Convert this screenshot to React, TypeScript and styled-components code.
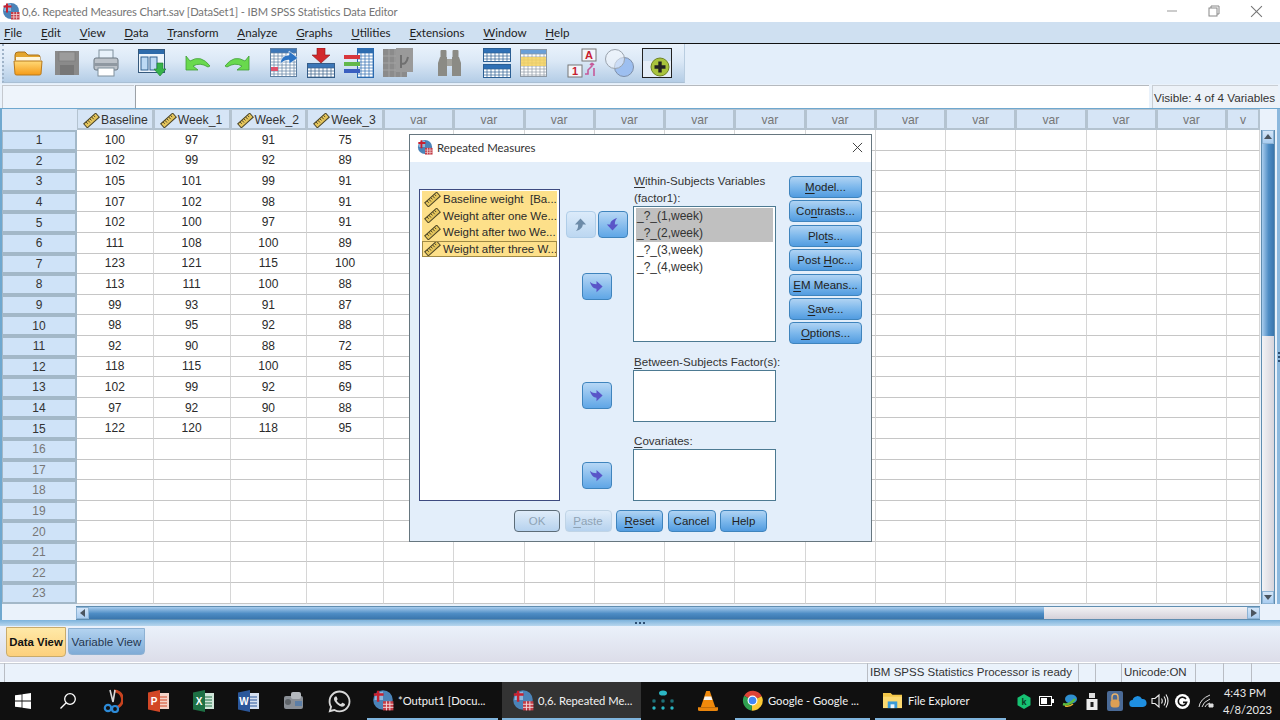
import React from 'react';
import styled, {createGlobalStyle} from 'styled-components';
import {FaWhatsapp} from 'react-icons/fa';

const GlobalStyle = createGlobalStyle`
    html, body {
        margin: 0;
        padding: 0;
        background: #eaf2fb;
        overflow: hidden;
    }
    * {
        box-sizing: border-box;
    }
`;

const UI_FONT = '"Liberation Sans", Arial, sans-serif';
const WIN_FONT = 'Lato, "Open Sans", sans-serif';

const Page = styled.div`
    position: relative;
    width: 1280px;
    height: 720px;
    display: flex;
    flex-direction: column;
    overflow: hidden;
    font-family: ${UI_FONT};
    font-size: 12px;
    color: #222;
`;

/* window chrome */

const TitleBar = styled.div`
    height: 22px;
    background: #fff;
    display: flex;
    align-items: center;
    padding-left: 2px;
    gap: 2px;
    font-family: ${WIN_FONT};
    font-size: 11.2px;
    letter-spacing: -0.13px;
    color: #757575;
`;

const WindowControls = styled.div`
    margin-left: auto;
    display: flex;
    align-items: center;
    padding-right: 17px;
    gap: 30px;
`;

const MenuBar = styled.div`
    height: 22px;
    background: #cfe0f1;
    border-bottom: 1px solid #111;
    display: flex;
    align-items: center;
    padding-left: 4px;
    gap: 18.8px;
    font-family: ${WIN_FONT};
    font-size: 11.6px;
    color: #222;
`;

const U = styled.span`
    text-decoration: underline;
    text-underline-offset: 2px;
`;

const ToolRow = styled.div`
    height: 40px;
    background: #e3eefa;
    display: flex;
`;

const Toolbar = styled.div`
    width: 683px;
    height: 39px;
    margin-left: 2px;
    display: flex;
    align-items: center;
    padding-left: 9px;
    background: linear-gradient(#eaf3fc, #dbe8f6 45%, #b4cde6);
    border-left: 2px dotted #9fb3c8;
    border-bottom: 1px solid #a9bfd4;
    border-right: 1px solid #b9cde0;
`;

const Tool = styled.div<{$ml: number; $w: number}>`
    margin-left: ${({$ml}) => $ml}px;
    width: ${({$w}) => $w}px;
    height: 32px;
    display: flex;
    align-items: center;
    justify-content: center;
    flex: none;
`;

const EditRow = styled.div`
    height: 24px;
    display: flex;
    background: #eaf2fb;
    padding: 1px 2px 0;
    gap: 1px;
`;

const NameBox = styled.div`
    width: 132px;
    border-top: 1px solid #c5c9cf;
    border-left: 1px solid #c5c9cf;
    background: #eef4fb;
`;

const ValueBox = styled.div`
    width: 1015px;
    background: #fff;
    border-top: 1px solid #b5b9be;
    border-left: 1px solid #9da1a6;
`;

const VisibleBox = styled.div`
    width: 126px;
    margin-left: 2px;
    background: #edf2f8;
    border-top: 1px solid #c9ced4;
    border-left: 1px solid #c9ced4;
    display: flex;
    align-items: center;
    padding-left: 1px;
    font-size: 11.7px;
    color: #333;
    white-space: nowrap;
`;

/* data sheet */

const Sheet = styled.div`
    height: 512px;
    background: #eaf2fb;
    border-top: 1px solid #6fa8cf;
    border-left: 2px solid #6fa8cf;
    display: flex;
    flex-direction: column;
`;

const SheetMain = styled.div`
    display: flex;
    height: 495px;
`;

const Grid = styled.div`
    width: 1258px;
    display: grid;
    grid-template-columns: 75px repeat(4, 76.75px) repeat(12, 70.25px) 33px;
    grid-template-rows: 21px repeat(23, 20.6px);
    background: #fff;
    overflow: hidden;
`;

const Corner = styled.div`
    background: #dbe8f7;
`;

const ColHead = styled.div<{$empty?: boolean}>`
    background: #d6e5f6;
    border: 1px solid #b4c3d0;
    border-right-width: 2px;
    border-bottom-width: 2px;
    display: flex;
    align-items: center;
    justify-content: ${({$empty}) => ($empty ? 'center' : 'flex-start')};
    padding: 2px 0 0 ${({$empty}) => ($empty ? 0 : 5)}px;
    gap: 1px;
    font-size: 12.2px;
    color: ${({$empty}) => ($empty ? '#777' : '#333')};
    white-space: nowrap;
    overflow: hidden;
`;

const RowHead = styled.div<{$muted: boolean}>`
    background: #cfe3f8;
    border: 2px solid #a3b8c8;
    border-left-width: 1px;
    margin-bottom: 0;
    display: flex;
    align-items: center;
    justify-content: center;
    color: ${({$muted}) => ($muted ? '#777' : '#333')};
`;

const Cell = styled.div`
    border-right: 1px solid #d6d6d6;
    border-bottom: 1px solid #c6c6c6;
    display: flex;
    align-items: center;
    justify-content: center;
    color: #2a2a2a;
`;

const VScroll = styled.div`
    width: 14px;
    margin-left: 1px;
    margin-top: 21px;
    height: 474px;
    display: flex;
    flex-direction: column;
    border-left: 1px solid #5f8db0;
    border-right: 1px solid #5f8db0;
`;

const ScrollButton = styled.div<{$w?: number; $h?: number}>`
    flex: none;
    width: ${({$w}) => ($w ? `${$w}px` : 'auto')};
    height: ${({$h}) => ($h ? `${$h}px` : 'auto')};
    background: linear-gradient(#d5e6f8, #a9cdf0);
    border: 1px solid #8db3d4;
    display: flex;
    align-items: center;
    justify-content: center;
`;

const VThumb = styled.div`
    height: 192px;
    background: linear-gradient(90deg, #a9cdee, #4d8cc4 55%, #3a76ad);
`;

const VTrack = styled.div`
    flex: 1;
    background: linear-gradient(90deg, #f2f2f5, #d8d5dc);
`;

const RightEdge = styled.div`
    width: 3px;
    margin-left: 2px;
    background: #8cb8dd;
    display: flex;
    flex-direction: column;
    align-items: center;
    justify-content: center;
    gap: 2px;
`;

const HScrollRow = styled.div`
    height: 15px;
    margin-top: 2px;
    padding-left: 74px;
    display: flex;
    border-bottom: 1px solid #fff;
`;

const HBar = styled.div`
    width: 1184px;
    display: flex;
    border-top: 1px solid #5f8db0;
    border-bottom: 1px solid #5f8db0;
`;

const HThumb = styled.div`
    width: 955px;
    background: linear-gradient(#a9cdee, #4d8cc4 55%, #3a76ad);
`;

const HTrack = styled.div`
    flex: 1;
    background: linear-gradient(#f2f2f5, #d4d1d9);
`;

const Splitter = styled.div`
    height: 6px;
    background: linear-gradient(#7db3dc, #b7d6ee);
    display: flex;
    align-items: center;
    justify-content: center;
    gap: 2px;
`;

const Dot = styled.span`
    width: 2px;
    height: 2px;
    background: #2d4f74;
`;

const TabsBar = styled.div`
    height: 36px;
    background: linear-gradient(#eaf1fb, #dcdde9);
    display: flex;
    align-items: flex-start;
    padding-left: 6px;
    gap: 2px;
`;

const ViewTab = styled.div<{$active?: boolean}>`
    width: ${({$active}) => ($active ? 60 : 77)}px;
    height: ${({$active}) => ($active ? 30 : 27)}px;
    margin-top: ${({$active}) => ($active ? 1 : 2)}px;
    border-radius: 0 0 4px 4px;
    display: flex;
    align-items: center;
    justify-content: center;
    white-space: nowrap;
    font-size: ${({$active}) => ($active ? 11.4 : 11.6)}px;
    background: ${({$active}) =>
        $active ? 'linear-gradient(#ffe9a8, #fdd07c)' : 'linear-gradient(#b3d3f0, #7fabd6)'};
    border: 1px solid ${({$active}) => ($active ? '#c9ab6c' : '#8db1d3')};
    color: ${({$active}) => ($active ? '#111' : '#24364f')};
    font-weight: ${({$active}) => ($active ? 600 : 400)};
`;

const StatusBar = styled.div`
    height: 20px;
    background: #eaf2fb;
    border-top: 1px solid #fff;
    box-shadow: inset 0 1px 0 #c8cdd4;
    display: flex;
    padding-left: 4px;
    font-size: 11.5px;
`;

const StatusCell = styled.div<{$w: number}>`
    width: ${({$w}) => $w}px;
    border-left: 1px solid #b9bdc4;
    padding-left: 2px;
    color: #333;
    line-height: 19px;
    white-space: nowrap;
`;

/* taskbar */

const Taskbar = styled.div`
    height: 38px;
    background: #101010;
    display: flex;
    align-items: stretch;
    font-family: ${WIN_FONT};
    font-size: 11.2px;
    color: #f2f2f2;
`;

const TaskSlot = styled.div<{$w?: number}>`
    width: ${({$w}) => $w || 45.3}px;
    flex: none;
    display: flex;
    align-items: center;
    justify-content: center;
`;

const AppButton = styled.div<{$w: number; $active?: boolean; $ml: number; $pl: number}>`
    width: ${({$w}) => $w}px;
    margin-left: ${({$ml}) => $ml}px;
    flex: none;
    display: flex;
    align-items: center;
    gap: 4px;
    padding-left: ${({$pl}) => $pl}px;
    white-space: nowrap;
    background: ${({$active}) => ($active ? '#333333' : 'transparent')};
    border-bottom: 2px solid #7fb4dc;
    overflow: hidden;
`;

const Tray = styled.div`
    margin-left: auto;
    display: flex;
    align-items: center;
`;

const TraySlot = styled.div`
    width: 22.7px;
    flex: none;
    display: flex;
    align-items: center;
    justify-content: center;
`;

const Clock = styled.div`
    width: 44px;
    margin-left: 6px;
    margin-right: 13px;
    text-align: center;
    line-height: 17px;
    white-space: nowrap;
    color: #e8e8e8;
`;

/* dialog */

const Dialog = styled.div`
    position: absolute;
    left: 409px;
    top: 134px;
    width: 463px;
    height: 408px;
    border: 1px solid #66767f;
    background: #e3eefa;
    display: flex;
    flex-direction: column;
`;

const DialogTitle = styled.div`
    height: 27px;
    background: #fff;
    display: flex;
    align-items: center;
    padding: 0 8px 3px 7px;
    gap: 4px;
    font-family: ${WIN_FONT};
    font-size: 11.4px;
    color: #333;
`;

const CloseBox = styled.div`
    margin-left: auto;
    display: flex;
`;

const DialogBody = styled.div`
    display: flex;
    padding: 10px 0 0 9px;
    height: 348px;
`;

const SourceList = styled.div`
    width: 141px;
    height: 312px;
    margin-top: 17px;
    background: #fff;
    border: 1.5px solid #3d4a80;
    padding: 1px 2px;
    flex: none;
`;

const SourceItem = styled.div<{$focus?: boolean}>`
    height: 16.5px;
    background: #fde08a;
    display: flex;
    align-items: center;
    gap: 2px;
    padding-left: 2px;
    white-space: nowrap;
    font-size: 11.5px;
    color: #2b2b2b;
    outline: ${({$focus}) => ($focus ? '1px solid #a08a45' : 'none')};
    outline-offset: -1px;
`;

const ItemText = styled.span`
    white-space: pre;
`;

const ArrowColumn = styled.div`
    width: 73px;
    flex: none;
    padding-top: 39px;
    display: flex;
    flex-direction: column;
    align-items: center;
`;

const ArrowPair = styled.div`
    display: flex;
    gap: 2px;
`;

const ArrowButton = styled.div<{$mt?: number; $faded?: boolean}>`
    width: 30px;
    height: 27px;
    margin-top: ${({$mt}) => $mt || 0}px;
    border-radius: 4px;
    border: 1px solid ${({$faded}) => ($faded ? '#afcde8' : '#3f84bd')};
    background: ${({$faded}) =>
        $faded ? 'linear-gradient(#dcebfa, #bcd7f1)' : 'linear-gradient(#b7d7f5, #5fa6e6)'};
    display: flex;
    align-items: center;
    justify-content: center;
`;

const FieldColumn = styled.div`
    width: 143px;
    flex: none;
    display: flex;
    flex-direction: column;
`;

const FieldLabel = styled.div<{$mt?: number}>`
    height: 17px;
    margin-top: ${({$mt}) => $mt || 0}px;
    padding-left: 1px;
    line-height: 18px;
    font-size: 11.6px;
    color: #333;
    white-space: nowrap;
`;

const FieldBox = styled.div<{$h: number}>`
    height: ${({$h}) => $h}px;
    background: #fff;
    border: 1.5px solid #4d7a92;
    padding: 1px 2px 0;
`;

const FactorRow = styled.div<{$selected?: boolean}>`
    height: 17px;
    width: 137px;
    line-height: 17px;
    padding-left: 1px;
    background: ${({$selected}) => ($selected ? '#c0c0c0' : 'transparent')};
    color: #333;
`;

const SideButtons = styled.div`
    width: 73px;
    margin-left: 13px;
    margin-top: 4px;
    flex: none;
    display: flex;
    flex-direction: column;
    gap: 2.4px;
`;

const DialogButton = styled.div<{$w?: number; $state?: 'ok' | 'off'}>`
    width: ${({$w}) => ($w ? `${$w}px` : '100%')};
    height: 22px;
    flex: none;
    border-radius: 4px;
    display: flex;
    align-items: center;
    justify-content: center;
    white-space: nowrap;
    font-size: 11.5px;
    color: ${({$state}) => ($state ? '#8fa3b5' : '#222')};
    border: 1px solid ${({$state}) =>
        $state === 'ok' ? '#5c6c78' : $state === 'off' ? '#c0d4e6' : '#3f84bd'};
    background: ${({$state}) =>
        $state ? 'linear-gradient(#dfecf9, #b6d2ee)' : 'linear-gradient(#b0d3f3, #7db8ec 50%, #529ce0)'};
`;

const DialogFooter = styled.div`
    display: flex;
    padding-left: 104px;
    gap: 4.5px;
`;

/* drawings */

const Ruler = () => (
    <svg width="17" height="15" viewBox="0 0 17 15" style={{flex: 'none'}}>
        <g transform="rotate(-42 8.5 7.5)">
            <rect x="0.5" y="4.8" width="16" height="5.4" fill="#e6c65c" stroke="#4b4426" strokeWidth="1" />
            <path d="M3.5 5v2.4M6 5v3M8.5 5v2.4M11 5v3M13.5 5v2.4" stroke="#4b4426" strokeWidth="0.9" />
        </g>
    </svg>
);

const SpssLogo = ({size = 18}: {size?: number}) => (
    <svg width={size} height={size} viewBox="0 0 18 18" style={{flex: 'none'}}>
        <circle cx="9" cy="9" r="8" fill="#4b83b8" />
        <path d="M2 9a7 7 0 0 1 7-7v7z" fill="#8eb7db" />
        <path d="M5 1.5v9M1.5 4.5h8" stroke="#c8202f" strokeWidth="2" />
        <rect x="9" y="10" width="8.5" height="7.5" fill="#c23b45" />
        <path d="M9 12.5h8.5M9 15h8.5M11.8 10v7.5M14.6 10v7.5" stroke="#f2d7d9" strokeWidth="0.8" />
    </svg>
);

const BentArrow = ({dir, color}: {dir: 'up' | 'down' | 'right'; color: string}) => {
    const angle = dir === 'right' ? 0 : dir === 'down' ? 90 : -90;
    return (
        <svg width="15" height="15" viewBox="0 0 16 16">
            <path
                transform={`rotate(${angle} 8 8)`}
                d="M1 3C3 5 5 5.5 8 5.5V2l6.5 6L8 14v-3.6C5 10.4 2.4 8 1 3z"
                fill={color}
            />
        </svg>
    );
};

const Triangle = ({dir}: {dir: 'up' | 'down' | 'left' | 'right'}) => {
    const points = {
        up: '1,7 9,7 5,2',
        down: '1,2 9,2 5,7',
        left: '7,1 7,9 2,5',
        right: '2,1 2,9 8,5',
    }[dir];
    return (
        <svg width="10" height="10" viewBox="0 0 10 10">
            <polygon points={points} fill="#4a5560" />
        </svg>
    );
};

const TableGlyph = ({w, h, head, line}: {w: number; h: number; head: string; line: string}) => {
    const cols = [];
    for (let x = 4; x < w; x += 4) cols.push(x);
    const rows = [];
    for (let y = 5; y < h; y += 3) rows.push(y);
    return (
        <g>
            <rect x="0.5" y="0.5" width={w - 1} height={h - 1} fill="#fff" stroke={line} />
            <rect x="1" y="1" width={w - 2} height="4" fill={head} />
            {cols.map(x => <path key={x} d={`M${x} 5V${h}`} stroke={line} strokeWidth="0.7" />)}
            {rows.map(y => <path key={y} d={`M0 ${y}H${w}`} stroke={line} strokeWidth="0.7" />)}
        </g>
    );
};

const FolderIcon = () => (
    <svg width="30" height="28" viewBox="0 0 30 28">
        <path d="M2 6q0-3 3-3h7l3 3h10q2 0 2 2v3H2z" fill="#e3a52d" stroke="#a9701a" />
        <rect x="3" y="8" width="24" height="5" fill="#fff6dc" />
        <path d="M1 12h28l-1 13q0 1-2 1H4q-2 0-2-1z" fill="url(#folderFill)" stroke="#b87a1d" />
        <defs>
            <linearGradient id="folderFill" x1="0" y1="0" x2="0" y2="1">
                <stop offset="0" stopColor="#ffd977" />
                <stop offset="1" stopColor="#f59a17" />
            </linearGradient>
        </defs>
    </svg>
);

const SaveIcon = () => (
    <svg width="26" height="26" viewBox="0 0 26 26">
        <rect x="1" y="1" width="24" height="24" fill="#8a8a8a" />
        <rect x="5" y="2" width="16" height="9" fill="#9c9c9c" stroke="#777" strokeWidth="0.6" />
        <rect x="6" y="15" width="14" height="10" fill="#777" />
    </svg>
);

const PrintIcon = () => (
    <svg width="26" height="28" viewBox="0 0 26 28">
        <rect x="6" y="1" width="14" height="10" fill="#e8f2fb" stroke="#7f8f9c" />
        <rect x="1" y="9" width="24" height="12" rx="2" fill="#bcc2c9" stroke="#6b7680" />
        <rect x="1.5" y="14" width="23" height="3" fill="#8f98a1" />
        <rect x="5" y="19" width="16" height="8" fill="#fff" stroke="#7f8f9c" />
    </svg>
);

const RecallIcon = () => (
    <svg width="28" height="28" viewBox="0 0 28 28">
        <rect x="0.5" y="0.5" width="26" height="23" fill="#eef5fc" stroke="#36597c" />
        <rect x="1" y="1" width="25" height="4" fill="#2e6bab" />
        <rect x="3" y="8" width="7" height="13" fill="#bcd9f4" stroke="#31618f" />
        <rect x="12" y="8" width="7" height="13" fill="#bcd9f4" stroke="#31618f" />
        <path d="M19 14h6v6h3l-6 7-6-7h3z" fill="#37b34a" stroke="#1d7e2e" strokeWidth="0.6" />
    </svg>
);

const TurnArrow = ({flip}: {flip?: boolean}) => (
    <svg width="26" height="18" viewBox="0 0 26 18" style={flip ? {transform: 'scaleX(-1)'} : undefined}>
        <path d="M1 2v14h12l-5-4q7-4 15 1l2-1Q16 0 5 7z" fill="#69d94d" stroke="#3f9e35" strokeWidth="0.8" />
    </svg>
);

const GotoCaseIcon = () => (
    <svg width="29" height="30" viewBox="0 0 29 30">
        <TableGlyph w={27} h={29} head="#3c77b8" line="#5d7ea1" />
        <rect x="1" y="19" width="7" height="4" fill="#e0506a" />
        <path d="M10 16q1-9 9-9V3l9 7-9 6v-4q-5 0-9 4z" fill="#2c74c4" stroke="#fff" strokeWidth="0.6" />
    </svg>
);

const GotoVarIcon = () => (
    <svg width="28" height="30" viewBox="0 0 28 30">
        <g transform="translate(0 15)">
            <TableGlyph w={28} h={15} head="#3c77b8" line="#355c88" />
        </g>
        <path d="M10 0h8v7h5L14 15 5 7h5z" fill="#d2282c" stroke="#8c1719" strokeWidth="0.6" />
    </svg>
);

const VarListIcon = () => (
    <svg width="30" height="30" viewBox="0 0 30 30">
        <g transform="translate(13 0)">
            <TableGlyph w={17} h={30} head="#2c6cb0" line="#2c6cb0" />
        </g>
        <rect x="0" y="7" width="16" height="4" fill="#d8373c" />
        <rect x="0" y="14" width="16" height="4" fill="#62b84b" />
        <rect x="0" y="21" width="16" height="4" fill="#3b5fc0" />
    </svg>
);

const GreyTableIcon = () => (
    <svg width="30" height="30" viewBox="0 0 30 30">
        <rect x="0" y="1" width="24" height="28" fill="#8b8b8b" />
        <path d="M6 1v28M12 1v28M18 1v28M0 8h24M0 15h24M0 22h24" stroke="#a3a3a3" />
        <rect x="13" y="0" width="17" height="24" fill="#9a9a9a" />
        <path d="M18 7v13M18 15q5 3 7-6" stroke="#6f6f6f" strokeWidth="2" fill="none" />
    </svg>
);

const BinocularsIcon = () => (
    <svg width="25" height="28" viewBox="0 0 25 28" fill="#8b8b85">
        <rect x="3.5" y="1" width="6" height="8" rx="1" />
        <rect x="15.5" y="1" width="6" height="8" rx="1" />
        <path d="M3 8h7v19H1V14z" />
        <path d="M22 8h-7v19h9V14z" />
        <rect x="10" y="10" width="5" height="7" fill="#a3a39d" />
    </svg>
);

const DoubleTableIcon = () => (
    <svg width="28" height="30" viewBox="0 0 28 30">
        <TableGlyph w={28} h={14} head="#2f70b5" line="#2b5f94" />
        <g transform="translate(0 16)">
            <TableGlyph w={28} h={14} head="#2f70b5" line="#2b5f94" />
        </g>
    </svg>
);

const YellowTableIcon = () => (
    <svg width="27" height="28" viewBox="0 0 27 28">
        <TableGlyph w={27} h={28} head="#6a9fd8" line="#8d99a5" />
        <rect x="1" y="8" width="25" height="9" fill="#f5d15e" opacity="0.85" />
    </svg>
);

const ValueLabelIcon = () => (
    <svg width="30" height="30" viewBox="0 0 30 30">
        <rect x="15" y="1" width="14" height="12" fill="#f3f6fb" stroke="#777" />
        <text x="22" y="11" fontSize="11" fontWeight="700" fontFamily={UI_FONT} fill="#c8202f" textAnchor="middle">A</text>
        <rect x="1" y="17" width="14" height="12" fill="#f3f6fb" stroke="#777" />
        <text x="8" y="27" fontSize="11" fontWeight="700" fontFamily={UI_FONT} fill="#c8202f" textAnchor="middle">1</text>
        <path d="M18 26h3v-4l4-4v-3M25 15l-2 2M25 15l2 2M27 28v-8" stroke="#c65a9a" strokeWidth="1.6" fill="none" />
    </svg>
);

const CirclesIcon = () => (
    <svg width="30" height="30" viewBox="0 0 30 30">
        <circle cx="20" cy="19" r="9.5" fill="#9dbff0" stroke="#7e8fa8" />
        <circle cx="11" cy="11" r="9.5" fill="#f3f6fb" fillOpacity="0.55" stroke="#9aa3ad" />
    </svg>
);

const AddOnIcon = () => (
    <svg width="30" height="30" viewBox="0 0 30 30">
        <rect x="0.5" y="0.5" width="29" height="29" fill="#e6eef7" stroke="#222" />
        <rect x="1" y="1" width="28" height="12" fill="#cfe0f1" />
        <circle cx="18" cy="19" r="9" fill="#a9c43c" stroke="#6e8424" />
        <path d="M18 13.5v11M12.5 19h11" stroke="#222" strokeWidth="3.4" />
    </svg>
);

const WindowsIcon = () => (
    <svg width="16" height="16" viewBox="0 0 16 16">
        <path d="M0 2.3 6.6 1.4v6.2H0zM7.4 1.3 16 0v7.6H7.4zM0 8.4h6.6v6.2L0 13.7zM7.4 8.4H16V16l-8.6-1.3z" fill="#fff" />
    </svg>
);

const SearchIcon = () => (
    <svg width="18" height="18" viewBox="0 0 18 18" fill="none" stroke="#fff" strokeWidth="1.3">
        <circle cx="11" cy="7" r="5.3" />
        <path d="M7.2 10.8 1.5 16.5" />
    </svg>
);

const SnipIcon = () => (
    <svg width="20" height="24" viewBox="0 0 20 24" fill="none">
        <path d="M11 2a8.5 8.5 0 0 1 4 16" stroke="#c8431f" strokeWidth="3" />
        <path d="M7 1l3 12M12 1l-2 12" stroke="#d8d8d8" strokeWidth="1.6" />
        <circle cx="5" cy="19" r="3.2" stroke="#2d8bd8" strokeWidth="2.2" />
        <circle cx="12" cy="20" r="3" stroke="#2d8bd8" strokeWidth="2.2" />
    </svg>
);

const OfficeIcon = ({bg, letter, lines}: {bg: string; letter: string; lines: string}) => (
    <svg width="22" height="22" viewBox="0 0 22 22">
        <rect x="9" y="3" width="12" height="16" fill={lines} />
        <path d="M12 7h7M12 10h7M12 13h7M12 16h7" stroke={bg} strokeWidth="1" />
        <path d="M0 2.5 12 0v22L0 19.5z" fill={bg} />
        <text x="6" y="15" fontSize="10" fontWeight="700" fontFamily={UI_FONT} fill="#fff" textAnchor="middle">{letter}</text>
    </svg>
);

const CameraIcon = () => (
    <svg width="22" height="20" viewBox="0 0 22 20">
        <rect x="1" y="5" width="19" height="13" rx="2" fill="#8a8f96" />
        <rect x="8" y="1" width="10" height="7" rx="2" fill="#b5b9be" />
        <rect x="12" y="10" width="7" height="5" fill="#5c7ea6" />
        <circle cx="5" cy="11" r="3" fill="#5e6368" />
    </svg>
);

const NodesIcon = () => (
    <svg width="24" height="24" viewBox="0 0 24 24" fill="#2bb7c4">
        <ellipse cx="12" cy="4" rx="4" ry="2.6" />
        <rect x="2" y="11" width="2" height="2" fill="none" stroke="#2bb7c4" strokeWidth="0.7" />
        <rect x="11" y="11" width="2" height="2" fill="none" stroke="#2bb7c4" strokeWidth="0.7" />
        <rect x="20" y="11" width="2" height="2" fill="none" stroke="#2bb7c4" strokeWidth="0.7" />
        <circle cx="3" cy="19" r="1.7" />
        <circle cx="12" cy="19" r="1.7" />
        <circle cx="21" cy="19" r="1.7" />
    </svg>
);

const VlcIcon = () => (
    <svg width="20" height="22" viewBox="0 0 22 24">
        <path d="M9 1h4l6 18H3z" fill="#f08a0c" />
        <path d="M7.4 7h7.2l1.2 4H6.2z" fill="#f6f6f6" />
        <path d="M0 19h22v3q0 1-2 1H2q-2 0-2-1z" fill="#e9850c" />
    </svg>
);

const ChromeIcon = () => (
    <svg width="23" height="23" viewBox="0 0 24 24" style={{flex: 'none'}}>
        <path d="M12 12 3.3 7A10.5 10.5 0 0 1 21.6 7.5z" fill="#dd4437" />
        <path d="M12 12 21.6 7.5A10.5 10.5 0 0 1 11 22.5z" fill="#fcc934" />
        <path d="M12 12 11 22.5A10.5 10.5 0 0 1 3.3 7z" fill="#2fa04f" />
        <circle cx="12" cy="12" r="5.2" fill="#fff" />
        <circle cx="12" cy="12" r="4" fill="#4486f4" />
    </svg>
);

const ExplorerIcon = () => (
    <svg width="21" height="19" viewBox="0 0 22 20" style={{flex: 'none', marginRight: 1}}>
        <path d="M1 2h8l2 2h10v14H1z" fill="#f2c648" />
        <rect x="1" y="6" width="20" height="12" fill="#fbd970" />
        <rect x="6" y="11" width="10" height="7" fill="#3b9ad6" />
        <rect x="9" y="14" width="4" height="4" fill="#eaf4fb" />
    </svg>
);

const TrayIcon = ({kind}: {kind: string}) => {
    switch (kind) {
        case 'kaspersky':
            return (
                <svg width="14" height="15" viewBox="0 0 14 15">
                    <path d="M7 0l6.5 3.7v7.6L7 15 .5 11.3V3.7z" fill="#16c172" />
                    <text x="7" y="11" fontSize="9" fontWeight="700" fontFamily={UI_FONT} fill="#0b3a24" textAnchor="middle">k</text>
                </svg>
            );
        case 'battery':
            return (
                <svg width="15" height="10" viewBox="0 0 15 10">
                    <rect x="0.5" y="0.5" width="12" height="9" fill="#111" stroke="#fff" />
                    <rect x="2" y="2" width="6" height="6" fill="#fff" />
                    <rect x="13" y="3" width="2" height="4" fill="#fff" />
                </svg>
            );
        case 'globe':
            return (
                <svg width="16" height="14" viewBox="0 0 16 14">
                    <ellipse cx="9" cy="5" rx="6" ry="4.5" fill="#2f8fd0" />
                    <path d="M1 10q6 2 12-5" stroke="#5dbb3f" strokeWidth="2.4" fill="none" />
                    <path d="M3 12q5 1 8-2" stroke="#e2b62f" strokeWidth="1.4" fill="none" />
                </svg>
            );
        case 'usb':
            return (
                <svg width="12" height="17" viewBox="0 0 12 17">
                    <rect x="3" y="0" width="6" height="5" fill="#ddd" />
                    <rect x="0.5" y="6" width="11" height="11" fill="#eee" />
                    <rect x="4.5" y="9" width="3" height="5" fill="#222" />
                </svg>
            );
        case 'lock':
            return (
                <svg width="16" height="20" viewBox="0 0 16 20">
                    <rect width="16" height="20" rx="2" fill="#4a6a96" />
                    <path d="M5 9V6a3 3 0 0 1 6 0v3" stroke="#e9b26a" strokeWidth="1.4" fill="none" />
                    <rect x="3.5" y="8.5" width="9" height="8" rx="3" fill="#dca055" />
                </svg>
            );
        case 'cloud':
            return (
                <svg width="18" height="11" viewBox="0 0 18 11">
                    <path d="M4 11a3.5 3.5 0 0 1-.4-7A5 5 0 0 1 13 3a4 4 0 0 1 1 8z" fill="#1f8fe0" />
                </svg>
            );
        case 'volume':
            return (
                <svg width="18" height="16" viewBox="0 0 18 16" fill="none" stroke="#eee" strokeWidth="1.1">
                    <path d="M1 5.5h3L8 2v12l-4-3.5H1z" />
                    <path d="M10.5 5.5q1.5 2.5 0 5M13 3.5q3 4.5 0 9M15 1.5q4 6.5 0 13" />
                </svg>
            );
        case 'grammarly':
            return (
                <svg width="15" height="15" viewBox="0 0 15 15">
                    <circle cx="7.5" cy="7.5" r="7.5" fill="#fff" />
                    <path d="M11 5a4.2 4.2 0 1 0 .6 3.4H8" stroke="#111" strokeWidth="1.6" fill="none" />
                </svg>
            );
        default:
            return (
                <svg width="16" height="14" viewBox="0 0 16 14" fill="none" stroke="#ddd" strokeWidth="1">
                    <path d="M1 13Q2 5 12 1M4 13q1-5 8-8M7 13q1-3 5-4" />
                    <path d="M11 13h4v-3h-4z" fill="#ddd" />
                </svg>
            );
    }
};

const MinimizeIcon = () => (
    <svg width="12" height="12" viewBox="0 0 12 12"><path d="M1 6h10" stroke="#999" /></svg>
);

const RestoreIcon = () => (
    <svg width="12" height="12" viewBox="0 0 12 12" fill="none" stroke="#888">
        <rect x="1" y="3" width="8" height="8" />
        <path d="M3 3V1h8v8H9" />
    </svg>
);

const CloseIcon = ({color, size}: {color: string; size: number}) => (
    <svg width={size} height={size} viewBox="0 0 12 12" fill="none" stroke={color}>
        <path d="M1 1l10 10M11 1 1 11" />
    </svg>
);

/* data */

const VARIABLES = ['Baseline', 'Week_1', 'Week_2', 'Week_3'];

const DATA = [
    [100, 97, 91, 75],
    [102, 99, 92, 89],
    [105, 101, 99, 91],
    [107, 102, 98, 91],
    [102, 100, 97, 91],
    [111, 108, 100, 89],
    [123, 121, 115, 100],
    [113, 111, 100, 88],
    [99, 93, 91, 87],
    [98, 95, 92, 88],
    [92, 90, 88, 72],
    [118, 115, 100, 85],
    [102, 99, 92, 69],
    [97, 92, 90, 88],
    [122, 120, 118, 95],
];

const ROW_COUNT = 23;
const VAR_COLS = 13;

const TOOLS: Array<[number, number, React.ReactNode]> = [
    [0, 30, <FolderIcon />],
    [11, 26, <SaveIcon />],
    [13, 26, <PrintIcon />],
    [19, 28, <RecallIcon />],
    [19, 26, <TurnArrow />],
    [13, 26, <TurnArrow flip />],
    [20, 29, <GotoCaseIcon />],
    [8, 28, <GotoVarIcon />],
    [9, 30, <VarListIcon />],
    [9, 30, <GreyTableIcon />],
    [24, 25, <BinocularsIcon />],
    [21, 28, <DoubleTableIcon />],
    [9, 27, <YellowTableIcon />],
    [20, 30, <ValueLabelIcon />],
    [7, 30, <CirclesIcon />],
    [8, 30, <AddOnIcon />],
];

const SIDE_BUTTONS: Array<[string, string, string]> = [
    ['', 'M', 'odel...'],
    ['Co', 'n', 'trasts...'],
    ['Plo', 't', 's...'],
    ['Post ', 'H', 'oc...'],
    ['', 'E', 'M Means...'],
    ['', 'S', 'ave...'],
    ['', 'O', 'ptions...'],
];

const MENUS: Array<[string, string]> = [
    ['F', 'ile'],
    ['E', 'dit'],
    ['V', 'iew'],
    ['D', 'ata'],
    ['T', 'ransform'],
    ['A', 'nalyze'],
    ['G', 'raphs'],
    ['U', 'tilities'],
    ['E', 'xtensions'],
    ['W', 'indow'],
    ['H', 'elp'],
];

const SOURCE_ITEMS = [
    'Baseline weight  [Ba...',
    'Weight after one We...',
    'Weight after two We...',
    'Weight after three W...',
];

const TRAY = ['kaspersky', 'battery', 'globe', 'usb', 'lock', 'cloud', 'volume', 'grammarly', 'wifi'];

const App: React.FC = () => {
    const rows = Array.from({length: ROW_COUNT}, (_, i) => i);
    const varCols = Array.from({length: VAR_COLS}, (_, i) => i);
    return (
        <Page>
            <GlobalStyle />
            <TitleBar>
                <SpssLogo />
                0,6. Repeated Measures Chart.sav [DataSet1] - IBM SPSS Statistics Data Editor
                <WindowControls>
                    <MinimizeIcon />
                    <RestoreIcon />
                    <CloseIcon color="#777" size={13} />
                </WindowControls>
            </TitleBar>
            <MenuBar>
                {MENUS.map(([key, rest]) => (
                    <span key={key + rest}><U>{key}</U>{rest}</span>
                ))}
            </MenuBar>
            <ToolRow>
                <Toolbar>
                    {TOOLS.map(([ml, w, icon], i) => (
                        <Tool key={i} $ml={ml} $w={w}>{icon}</Tool>
                    ))}
                </Toolbar>
            </ToolRow>
            <EditRow>
                <NameBox />
                <ValueBox />
                <VisibleBox>Visible: 4 of 4 Variables</VisibleBox>
            </EditRow>
            <Sheet>
                <SheetMain>
                    <Grid>
                        <Corner />
                        {VARIABLES.map(name => (
                            <ColHead key={name}><Ruler />{name}</ColHead>
                        ))}
                        {varCols.map(i => (
                            <ColHead key={i} $empty>{i === VAR_COLS - 1 ? 'v' : 'var'}</ColHead>
                        ))}
                        {rows.map(r => (
                            <React.Fragment key={r}>
                                <RowHead $muted={r >= DATA.length}>{r + 1}</RowHead>
                                {VARIABLES.map((name, c) => (
                                    <Cell key={name}>{DATA[r] ? DATA[r][c] : ''}</Cell>
                                ))}
                                {varCols.map(i => <Cell key={i} />)}
                            </React.Fragment>
                        ))}
                    </Grid>
                    <VScroll>
                        <ScrollButton $h={14}><Triangle dir="up" /></ScrollButton>
                        <VThumb />
                        <VTrack />
                        <ScrollButton $h={13}><Triangle dir="down" /></ScrollButton>
                    </VScroll>
                    <RightEdge><Dot /><Dot /><Dot /></RightEdge>
                </SheetMain>
                <HScrollRow>
                    <HBar>
                        <ScrollButton $w={13}><Triangle dir="left" /></ScrollButton>
                        <HThumb />
                        <HTrack />
                        <ScrollButton $w={13}><Triangle dir="right" /></ScrollButton>
                    </HBar>
                </HScrollRow>
            </Sheet>
            <Splitter><Dot /><Dot /><Dot /></Splitter>
            <TabsBar>
                <ViewTab $active>Data View</ViewTab>
                <ViewTab>Variable View</ViewTab>
            </TabsBar>
            <StatusBar>
                <StatusCell $w={863} />
                <StatusCell $w={211}>IBM SPSS Statistics Processor is ready</StatusCell>
                <StatusCell $w={17} />
                <StatusCell $w={26} />
                <StatusCell $w={74}>Unicode:ON</StatusCell>
                <StatusCell $w={28} />
                <StatusCell $w={28} />
                <StatusCell $w={28} />
            </StatusBar>
            <Taskbar>
                <TaskSlot><WindowsIcon /></TaskSlot>
                <TaskSlot><SearchIcon /></TaskSlot>
                <TaskSlot><SnipIcon /></TaskSlot>
                <TaskSlot><OfficeIcon bg="#d24726" letter="P" lines="#f3d3c8" /></TaskSlot>
                <TaskSlot><OfficeIcon bg="#1e7145" letter="X" lines="#cfe5d8" /></TaskSlot>
                <TaskSlot><OfficeIcon bg="#2b579a" letter="W" lines="#d5e0f0" /></TaskSlot>
                <TaskSlot><CameraIcon /></TaskSlot>
                <TaskSlot><FaWhatsapp size={25} color="#d8d8d8" /></TaskSlot>
                <AppButton $w={131} $ml={4.6} $pl={5}>
                    <SpssLogo size={22} />*Output1 [Docu...
                </AppButton>
                <AppButton $w={139} $ml={4} $pl={10} $active>
                    <SpssLogo size={22} />0,6. Repeated Me...
                </AppButton>
                <TaskSlot $w={45}><NodesIcon /></TaskSlot>
                <TaskSlot $w={45}><VlcIcon /></TaskSlot>
                <AppButton $w={135} $ml={4} $pl={6}>
                    <ChromeIcon />Google - Google ...
                </AppButton>
                <AppButton $w={131} $ml={5} $pl={7}>
                    <ExplorerIcon />File Explorer
                </AppButton>
                <Tray>
                    {TRAY.map(kind => (
                        <TraySlot key={kind}><TrayIcon kind={kind} /></TraySlot>
                    ))}
                    <Clock>4:43 PM<br />4/8/2023</Clock>
                </Tray>
            </Taskbar>
            <Dialog>
                <DialogTitle>
                    <SpssLogo size={16} />
                    Repeated Measures
                    <CloseBox><CloseIcon color="#333" size={11} /></CloseBox>
                </DialogTitle>
                <DialogBody>
                    <SourceList>
                        {SOURCE_ITEMS.map((text, i) => (
                            <SourceItem key={text} $focus={i === SOURCE_ITEMS.length - 1}>
                                <Ruler /><ItemText>{text}</ItemText>
                            </SourceItem>
                        ))}
                    </SourceList>
                    <ArrowColumn>
                        <ArrowPair>
                            <ArrowButton $faded><BentArrow dir="up" color="#6d8ba8" /></ArrowButton>
                            <ArrowButton><BentArrow dir="down" color="#5a55c8" /></ArrowButton>
                        </ArrowPair>
                        <ArrowButton $mt={35}><BentArrow dir="right" color="#5a55c8" /></ArrowButton>
                        <ArrowButton $mt={82}><BentArrow dir="right" color="#5a55c8" /></ArrowButton>
                        <ArrowButton $mt={53}><BentArrow dir="right" color="#5a55c8" /></ArrowButton>
                    </ArrowColumn>
                    <FieldColumn>
                        <FieldLabel><U>W</U>ithin-Subjects Variables</FieldLabel>
                        <FieldLabel>(factor1):</FieldLabel>
                        <FieldBox $h={136}>
                            <FactorRow $selected>_?_(1,week)</FactorRow>
                            <FactorRow $selected>_?_(2,week)</FactorRow>
                            <FactorRow>_?_(3,week)</FactorRow>
                            <FactorRow>_?_(4,week)</FactorRow>
                        </FieldBox>
                        <FieldLabel $mt={11}><U>B</U>etween-Subjects Factor(s):</FieldLabel>
                        <FieldBox $h={52} />
                        <FieldLabel $mt={10}><U>C</U>ovariates:</FieldLabel>
                        <FieldBox $h={52} />
                    </FieldColumn>
                    <SideButtons>
                        {SIDE_BUTTONS.map(([before, key, after]) => (
                            <DialogButton key={key + after}>
                                <ItemText>{before}<U>{key}</U>{after}</ItemText>
                            </DialogButton>
                        ))}
                    </SideButtons>
                </DialogBody>
                <DialogFooter>
                    <DialogButton $w={46} $state="ok">OK</DialogButton>
                    <DialogButton $w={47} $state="off"><U>P</U>aste</DialogButton>
                    <DialogButton $w={47}><U>R</U>eset</DialogButton>
                    <DialogButton $w={48}>Cancel</DialogButton>
                    <DialogButton $w={47}>Help</DialogButton>
                </DialogFooter>
            </Dialog>
        </Page>
    );
};

export default App;
